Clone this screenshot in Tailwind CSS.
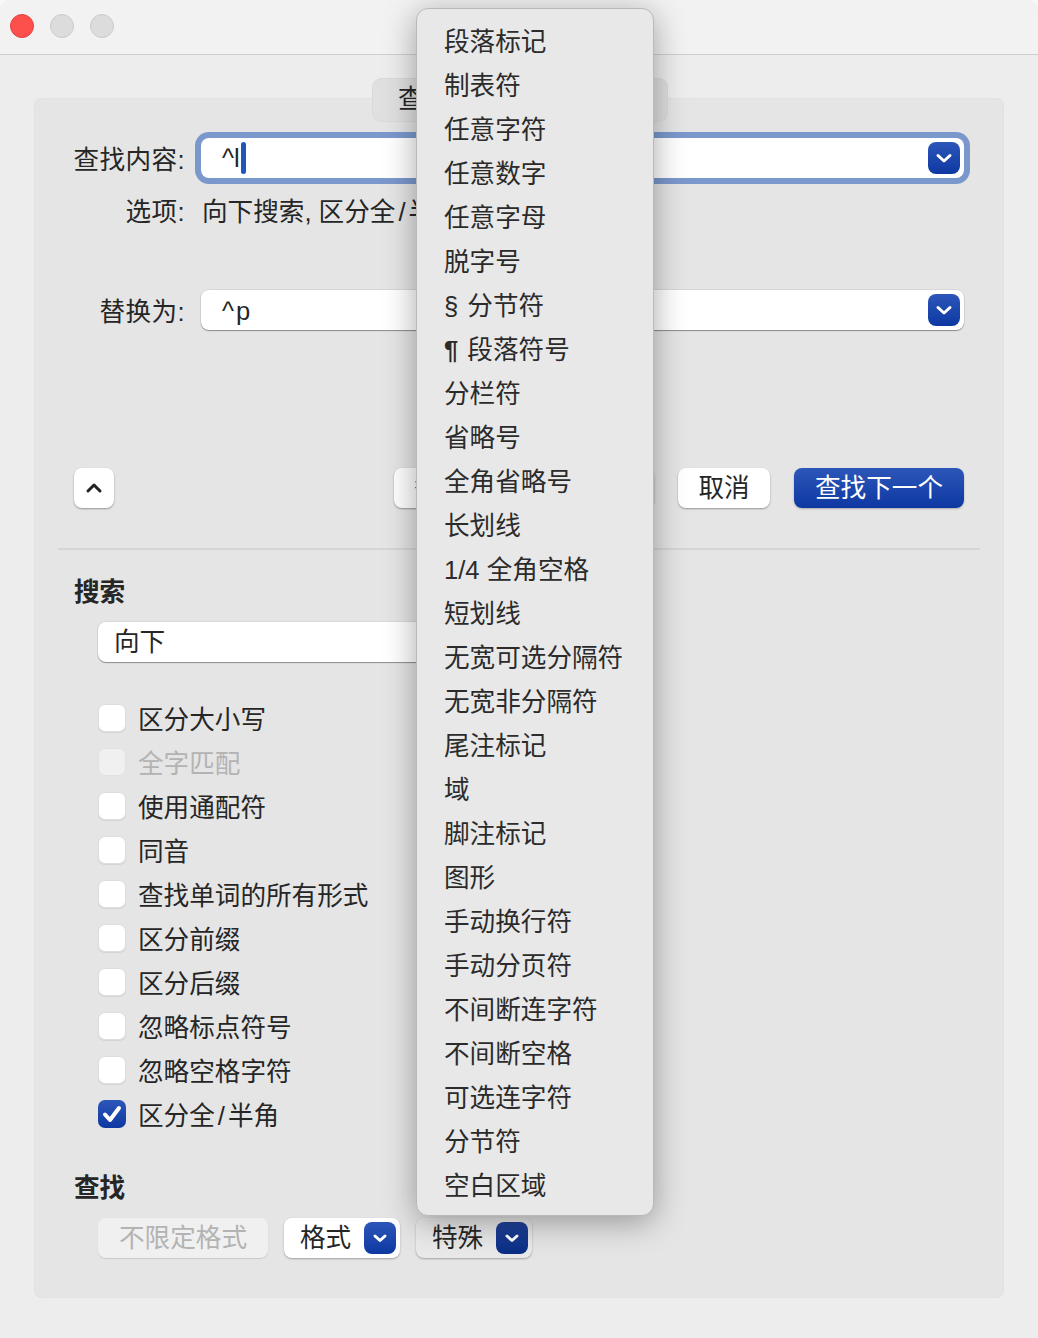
<!DOCTYPE html>
<html lang="zh-CN">
<head>
    <meta charset="UTF-8">
    <title>查找和替换</title>
    <script src="https://cdn.jsdelivr.net/npm/@tailwindcss/browser@4"></script>
</head>
<body class="bg-[#f7f7f7]">
<div class="relative w-[1038px] h-[1338px] overflow-hidden rounded-t-[10px] bg-[#ededed] text-[25.6px] leading-[40px] text-[#262626] font-['Liberation_Sans','Noto_Sans_CJK_SC',sans-serif]">

    <!-- title bar -->
    <div class="h-[55px] bg-[#f2f2f2] border-b border-[#cfcfcf] flex items-center gap-[16px] pl-[10px] pb-[2px]">
        <div class="w-[24px] h-[24px] rounded-full bg-[#fd4f4c] border border-[#e2423f]"></div>
        <div class="w-[24px] h-[24px] rounded-full bg-[#dcdcdc] border border-[#cbcbcb]"></div>
        <div class="w-[24px] h-[24px] rounded-full bg-[#dcdcdc] border border-[#cbcbcb]"></div>
    </div>

    <!-- main panel -->
    <div class="relative ml-[34px] mt-[43px] w-[970px] h-[1200px] bg-[#e5e5e5] rounded-[8px] shadow-[inset_0_0_0_1px_#e1e1e1]">
        <div class="absolute left-[338px] top-[-20px] w-[296px] h-[44px] rounded-[10px] bg-[#e0e0e0] shadow-[inset_0_0_0_1px_#dadada] pl-[26px] leading-[42px]">查找</div>

        <div class="flex pt-[40px]">
            <div class="w-[151px] h-[40px] leading-[44px] text-right tracking-[0.4px]">查找内容:</div>
            <div class="relative ml-[16px] w-[763px] h-[40px] flex items-center justify-between bg-white rounded-[8px] ring-[6px] ring-[#7b98cd] pl-[21px] pr-[4px]">
                <div class="flex items-center">^l<span class="ml-[1px] w-[5px] h-[32px] rounded-[3px] bg-[#1f56bd]"></span></div>
                <div class="w-[32px] h-[32px] rounded-[8px] bg-gradient-to-b from-[#2c56b8] to-[#0d38a2]">
                    <svg viewBox="0 0 32 32" class="w-[32px] h-[32px]"><path d="M10 13.5 L16 19 L22 13.5" fill="none" stroke="white" stroke-width="3" stroke-linecap="round" stroke-linejoin="round"/></svg>
                </div>
            </div>
        </div>

        <div class="flex mt-[13px]">
            <div class="w-[151px] h-[40px] leading-[43px] text-right tracking-[0.4px]">选项:</div>
            <div class="ml-[17px] h-[40px] leading-[43px]">向下搜索, 区分全<span class="mx-[3px]">/</span>半角</div>
        </div>

        <div class="flex mt-[59px]">
            <div class="w-[151px] h-[40px] leading-[44px] text-right tracking-[0.4px]">替换为:</div>
            <div class="ml-[16px] w-[763px] h-[40px] flex items-center justify-between bg-white rounded-[8px] shadow-[0_1px_1px_rgba(0,0,0,.35),0_0_0_1px_rgba(0,0,0,.06)] pl-[21px] pr-[4px]">
                <div class="h-[40px] leading-[42px] tracking-[2px]">^p</div>
                <div class="w-[32px] h-[32px] rounded-[8px] bg-gradient-to-b from-[#2c56b8] to-[#0d38a2]">
                    <svg viewBox="0 0 32 32" class="w-[32px] h-[32px]"><path d="M10 13.5 L16 19 L22 13.5" fill="none" stroke="white" stroke-width="3" stroke-linecap="round" stroke-linejoin="round"/></svg>
                </div>
            </div>
        </div>

        <div class="flex mt-[138px] pl-[40px]">
            <div class="w-[40px] h-[40px] rounded-[8px] bg-white shadow-[0_1px_2px_rgba(0,0,0,.35)]">
                <svg viewBox="0 0 40 40" class="w-[40px] h-[40px]"><path d="M14 23 L20 17 L26 23" fill="none" stroke="#222" stroke-width="3" stroke-linecap="round" stroke-linejoin="round"/></svg>
            </div>
            <div class="ml-[280px] w-[260px] h-[40px] rounded-[8px] bg-white shadow-[0_1px_2px_rgba(0,0,0,.35)] pl-[20px]">替换</div>
            <div class="ml-[24px] w-[92px] h-[40px] rounded-[8px] bg-white shadow-[0_1px_2px_rgba(0,0,0,.35)] text-center leading-[40px]">取消</div>
            <div class="ml-[24px] w-[170px] h-[40px] rounded-[8px] bg-gradient-to-b from-[#2c56b8] to-[#0d38a2] shadow-[0_1px_2px_rgba(0,0,0,.25)] text-white text-center leading-[40px]">查找下一个</div>
        </div>

        <div class="mt-[40px] ml-[24px] w-[922px] h-[2px] bg-[#d6d6d6]"></div>

        <div class="mt-[21px] pl-[40px] h-[40px] leading-[42px] font-bold">搜索</div>
        <div class="mt-[11px] ml-[64px] w-[340px] h-[40px] rounded-[8px] bg-white shadow-[0_1px_1px_rgba(0,0,0,.35),0_0_0_1px_rgba(0,0,0,.05)] pl-[16px]">向下</div>

        <div class="mt-[34px] ml-[64px]">
            <div class="flex items-center h-[44px]"><div class="w-[28px] h-[28px] rounded-[7px] bg-white shadow-[inset_0_0_0_1px_rgba(0,0,0,.13),0_1px_1px_rgba(0,0,0,.08)]"></div><div class="ml-[12px] h-[40px] leading-[44px]">区分大小写</div></div>
            <div class="flex items-center h-[44px]"><div class="w-[28px] h-[28px] rounded-[7px] bg-[#f0f0f0] shadow-[inset_0_0_0_1px_rgba(0,0,0,.06)]"></div><div class="ml-[12px] h-[40px] leading-[44px] text-[#b3b3b3]">全字匹配</div></div>
            <div class="flex items-center h-[44px]"><div class="w-[28px] h-[28px] rounded-[7px] bg-white shadow-[inset_0_0_0_1px_rgba(0,0,0,.13),0_1px_1px_rgba(0,0,0,.08)]"></div><div class="ml-[12px] h-[40px] leading-[44px]">使用通配符</div></div>
            <div class="flex items-center h-[44px]"><div class="w-[28px] h-[28px] rounded-[7px] bg-white shadow-[inset_0_0_0_1px_rgba(0,0,0,.13),0_1px_1px_rgba(0,0,0,.08)]"></div><div class="ml-[12px] h-[40px] leading-[44px]">同音</div></div>
            <div class="flex items-center h-[44px]"><div class="w-[28px] h-[28px] rounded-[7px] bg-white shadow-[inset_0_0_0_1px_rgba(0,0,0,.13),0_1px_1px_rgba(0,0,0,.08)]"></div><div class="ml-[12px] h-[40px] leading-[44px]">查找单词的所有形式</div></div>
            <div class="flex items-center h-[44px]"><div class="w-[28px] h-[28px] rounded-[7px] bg-white shadow-[inset_0_0_0_1px_rgba(0,0,0,.13),0_1px_1px_rgba(0,0,0,.08)]"></div><div class="ml-[12px] h-[40px] leading-[44px]">区分前缀</div></div>
            <div class="flex items-center h-[44px]"><div class="w-[28px] h-[28px] rounded-[7px] bg-white shadow-[inset_0_0_0_1px_rgba(0,0,0,.13),0_1px_1px_rgba(0,0,0,.08)]"></div><div class="ml-[12px] h-[40px] leading-[44px]">区分后缀</div></div>
            <div class="flex items-center h-[44px]"><div class="w-[28px] h-[28px] rounded-[7px] bg-white shadow-[inset_0_0_0_1px_rgba(0,0,0,.13),0_1px_1px_rgba(0,0,0,.08)]"></div><div class="ml-[12px] h-[40px] leading-[44px]">忽略标点符号</div></div>
            <div class="flex items-center h-[44px]"><div class="w-[28px] h-[28px] rounded-[7px] bg-white shadow-[inset_0_0_0_1px_rgba(0,0,0,.13),0_1px_1px_rgba(0,0,0,.08)]"></div><div class="ml-[12px] h-[40px] leading-[44px]">忽略空格字符</div></div>
            <div class="flex items-center h-[44px]">
                <div class="w-[28px] h-[28px] rounded-[7px] bg-gradient-to-b from-[#2c56b8] to-[#0d38a2]">
                    <svg viewBox="0 0 28 28" class="w-[28px] h-[28px]"><path d="M7 14.5 L12 20 L21 8" fill="none" stroke="white" stroke-width="4" stroke-linecap="round" stroke-linejoin="round"/></svg>
                </div>
                <div class="ml-[12px] h-[40px] leading-[44px]">区分全<span class="mx-[3px]">/</span>半角</div>
            </div>
        </div>

        <div class="mt-[31px] pl-[40px] h-[40px] leading-[42px] font-bold">查找</div>

        <div class="flex gap-[16px] mt-[11px] ml-[64px]">
            <div class="w-[170px] h-[40px] rounded-[8px] bg-[#f0f0f0] shadow-[0_1px_1px_rgba(0,0,0,.12)] text-[#b3b3b3] text-center">不限定格式</div>
            <div class="w-[116px] h-[40px] flex items-center justify-between rounded-[8px] bg-white shadow-[0_1px_2px_rgba(0,0,0,.3)] pl-[16px] pr-[4px]">
                <span>格式</span>
                <div class="w-[32px] h-[32px] rounded-[8px] bg-gradient-to-b from-[#2c56b8] to-[#0d38a2]">
                    <svg viewBox="0 0 32 32" class="w-[32px] h-[32px]"><path d="M11 14 L16 18.5 L21 14" fill="none" stroke="white" stroke-width="3" stroke-linecap="round" stroke-linejoin="round"/></svg>
                </div>
            </div>
            <div class="w-[116px] h-[40px] flex items-center justify-between rounded-[8px] bg-[#e9e9e9] shadow-[0_1px_2px_rgba(0,0,0,.3)] pl-[16px] pr-[4px]">
                <span>特殊</span>
                <div class="w-[32px] h-[32px] rounded-[8px] bg-gradient-to-b from-[#1f4299] to-[#0a2d85]">
                    <svg viewBox="0 0 32 32" class="w-[32px] h-[32px]"><path d="M11 14 L16 18.5 L21 14" fill="none" stroke="white" stroke-width="3" stroke-linecap="round" stroke-linejoin="round"/></svg>
                </div>
            </div>
        </div>
    </div>

    <!-- special characters menu -->
    <div class="absolute left-[416px] top-[8px] w-[238px] h-[1208px] pt-[11px] rounded-[12px] bg-[#e8e8e8] border border-[#b9b9b9] shadow-[0_6px_32px_rgba(0,0,0,.35)] text-[#2b2b2b]">
        <div class="h-[44px] pl-[27px] leading-[44px]">段落标记</div>
        <div class="h-[44px] pl-[27px] leading-[44px]">制表符</div>
        <div class="h-[44px] pl-[27px] leading-[44px]">任意字符</div>
        <div class="h-[44px] pl-[27px] leading-[44px]">任意数字</div>
        <div class="h-[44px] pl-[27px] leading-[44px]">任意字母</div>
        <div class="h-[44px] pl-[27px] leading-[44px]">脱字号</div>
        <div class="h-[44px] pl-[27px] leading-[44px]"><span class="mr-[2px]">§</span> 分节符</div>
        <div class="h-[44px] pl-[27px] leading-[44px]"><span class="mr-[2px] font-bold">¶</span> 段落符号</div>
        <div class="h-[44px] pl-[27px] leading-[44px]">分栏符</div>
        <div class="h-[44px] pl-[27px] leading-[44px]">省略号</div>
        <div class="h-[44px] pl-[27px] leading-[44px]">全角省略号</div>
        <div class="h-[44px] pl-[27px] leading-[44px]">长划线</div>
        <div class="h-[44px] pl-[27px] leading-[44px]">1/4 全角空格</div>
        <div class="h-[44px] pl-[27px] leading-[44px]">短划线</div>
        <div class="h-[44px] pl-[27px] leading-[44px]">无宽可选分隔符</div>
        <div class="h-[44px] pl-[27px] leading-[44px]">无宽非分隔符</div>
        <div class="h-[44px] pl-[27px] leading-[44px]">尾注标记</div>
        <div class="h-[44px] pl-[27px] leading-[44px]">域</div>
        <div class="h-[44px] pl-[27px] leading-[44px]">脚注标记</div>
        <div class="h-[44px] pl-[27px] leading-[44px]">图形</div>
        <div class="h-[44px] pl-[27px] leading-[44px]">手动换行符</div>
        <div class="h-[44px] pl-[27px] leading-[44px]">手动分页符</div>
        <div class="h-[44px] pl-[27px] leading-[44px]">不间断连字符</div>
        <div class="h-[44px] pl-[27px] leading-[44px]">不间断空格</div>
        <div class="h-[44px] pl-[27px] leading-[44px]">可选连字符</div>
        <div class="h-[44px] pl-[27px] leading-[44px]">分节符</div>
        <div class="h-[44px] pl-[27px] leading-[44px]">空白区域</div>
    </div>
</div>
</body>
</html>
